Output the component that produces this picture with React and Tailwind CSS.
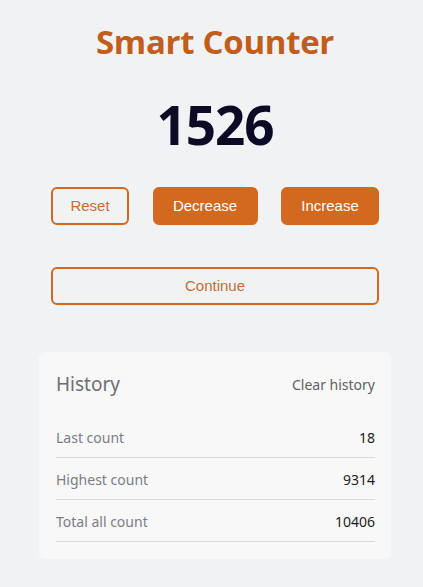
export default function App() {
  const rows = [
    ["Last count", "18"],
    ["Highest count", "9314"],
    ["Total all count", "10406"],
  ];
  return (
    <div className="min-h-screen w-full bg-[#f1f2f4] pb-[28px]">
      <div className="ml-[39px] flex w-[352px] flex-col">
        <h1 className="pt-[20px] text-center font-['Open_Sans',sans-serif] text-[33px] font-bold leading-[44px] tracking-[-0.3px] text-[#c25d1c]">
          Smart Counter
        </h1>
        <div className="mt-[29px] text-center font-['Open_Sans',sans-serif] text-[53px] font-bold leading-[64px] tracking-[-1px] text-[#0b0b26]">
          1526
        </div>
        <div className="mt-[30px] flex justify-between px-[12px] font-['Liberation_Sans',Arial,sans-serif] text-[15px]">
          <button className="h-[38px] w-[78px] rounded-[6px] border-2 border-[#d2691e] bg-transparent text-[#c86c36]">
            Reset
          </button>
          <button className="h-[38px] w-[105px] rounded-[6px] border-2 border-[#d2691e] bg-[#d2691e] text-white">
            Decrease
          </button>
          <button className="h-[38px] w-[98px] rounded-[6px] border-2 border-[#d2691e] bg-[#d2691e] text-white">
            Increase
          </button>
        </div>
        <div className="mt-[42px] px-[12px]">
          <button className="h-[38px] w-full rounded-[6px] border-2 border-[#d2691e] bg-transparent font-['Liberation_Sans',Arial,sans-serif] text-[15px] text-[#c86c36]">
            Continue
          </button>
        </div>
        <div className="mt-[47px] rounded-[6px] bg-[#f8f8f9] pb-[17px] pl-[17px] pr-[16px] pt-[17px] font-['Noto_Sans',sans-serif]">
          <div className="flex h-[30px] items-center justify-between">
            <span className="text-[19px] text-[#6e6e72]">History</span>
            <span className="text-[14px] text-[#5f5f64]">Clear history</span>
          </div>
          <div className="mt-[17px] flex flex-col">
            {rows.map(([label, value]) => (
              <div
                key={label}
                className="flex h-[42px] items-center justify-between border-b border-[#dadada] pt-[1px] text-[14px]"
              >
                <span className="text-[#7b7d85]">{label}</span>
                <span className="text-[#1c1c22]">{value}</span>
              </div>
            ))}
          </div>
        </div>
      </div>
    </div>
  );
}
